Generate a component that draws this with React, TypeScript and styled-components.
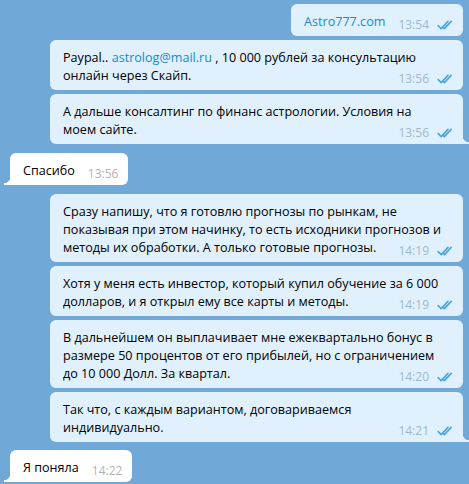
import React from "react";
import styled, { createGlobalStyle, css } from "styled-components";

const GlobalStyle = createGlobalStyle`
  html, body {
    margin: 0;
    padding: 0;
    background: #70a8d8;
  }
  body {
    font-family: "Open Sans", "Noto Sans", sans-serif;
    -webkit-font-smoothing: antialiased;
  }
`;

const Chat = styled.div`
  display: flex;
  flex-direction: column;
  padding: 4px 6px 0 10px;
  height: 484px;
  box-sizing: border-box;
  overflow: hidden;
`;

const Row = styled.div<{ $out?: boolean; $gap: number }>`
  display: flex;
  justify-content: ${(p) => (p.$out ? "flex-end" : "flex-start")};
  padding-left: ${(p) => (p.$out ? "40px" : "0")};
  margin-top: ${(p) => p.$gap}px;
`;

const Bubble = styled.div<{ $out?: boolean; $tail?: boolean; $full?: boolean }>`
  position: relative;
  display: flow-root;
  box-sizing: border-box;
  max-width: 413px;
  ${(p) => p.$full && "flex: 1;"}
  padding: 9px 12px 5px 13px;
  border-radius: 6px;
  background: ${(p) => (p.$out ? "#e0f1fd" : "#ffffff")};
  color: #000;
  font-size: 12.6px;
  line-height: 18px;
  ${(p) =>
    p.$tail &&
    (p.$out
      ? css`
          border-bottom-right-radius: 0;
          &::after {
            content: "";
            position: absolute;
            right: -6px;
            bottom: 0;
            width: 6px;
            height: 8px;
            background: radial-gradient(circle at 100% 0, transparent 6px, #e0f1fd 6.5px);
          }
        `
      : css`
          border-bottom-left-radius: 0;
          &::after {
            content: "";
            position: absolute;
            left: -6px;
            bottom: 0;
            width: 6px;
            height: 8px;
            background: radial-gradient(circle at 0 0, transparent 6px, #ffffff 6.5px);
          }
        `)}
`;

const Link = styled.span`
  color: #168acd;
`;

const Meta = styled.span<{ $out?: boolean }>`
  float: right;
  display: flex;
  align-items: center;
  gap: 8px;
  margin: 5px ${(p) => (p.$out ? "-3px" : "-2px")} -2px 13px;
  font-size: 12px;
  line-height: 14px;
  color: ${(p) => (p.$out ? "#9db9cc" : "#b3b3b3")};
`;

const Checks = () => (
  <svg width="17" height="10" viewBox="0 0 17 10" fill="none">
    <path
      d="M1.2 5.6 L4.2 8.6 L11 1.4 M7.4 8.6 L14.2 1.4 M5.8 7 L7.4 8.6"
      stroke="#44a6e8"
      strokeWidth="1.6"
      strokeLinecap="round"
      strokeLinejoin="round"
    />
  </svg>
);

type Msg = {
  out?: boolean;
  gap: number;
  tail?: boolean;
  full?: boolean;
  time: string;
  body: React.ReactNode;
};

const messages: Msg[] = [
  { out: true, gap: 0, time: "13:54", body: <Link>Astro777.com</Link> },
  {
    out: true,
    gap: 4,
    full: true,
    time: "13:56",
    body: (
      <>
        Paypal.. <Link>astrolog@mail.ru</Link> , 10 000 рублей за консультацию
        <br />
        онлайн через Скайп.
      </>
    ),
  },
  {
    out: true,
    gap: 4,
    full: true,
    tail: true,
    time: "13:56",
    body: (
      <>
        А дальше консалтинг по финанс астрологии. Условия на
        <br />
        моем сайте.
      </>
    ),
  },
  { gap: 9, tail: true, time: "13:56", body: "Спасибо" },
  {
    out: true,
    gap: 9,
    full: true,
    time: "14:19",
    body: (
      <>
        Сразу напишу, что я готовлю прогнозы по рынкам, не
        <br />
        показывая при этом начинку, то есть исходники прогнозов и
        <br />
        методы их обработки. А только готовые прогнозы.
      </>
    ),
  },
  {
    out: true,
    gap: 4,
    full: true,
    time: "14:19",
    body: (
      <>
        Хотя у меня есть инвестор, который купил обучение за 6&nbsp;000
        <br />
        долларов, и я открыл ему все карты и методы.
      </>
    ),
  },
  {
    out: true,
    gap: 4,
    full: true,
    time: "14:20",
    body: (
      <>
        В дальнейшем он выплачивает мне ежеквартально бонус в
        <br />
        размере 50 процентов от его прибылей, но с ограничением
        <br />
        до 10 000 Долл. За квартал.
      </>
    ),
  },
  {
    out: true,
    gap: 4,
    full: true,
    tail: true,
    time: "14:21",
    body: (
      <>
        Так что, с каждым вариантом, договариваемся
        <br />
        индивидуально.
      </>
    ),
  },
  { gap: 8, tail: true, time: "14:22", body: "Я поняла" },
];

export default function App() {
  return (
    <>
      <GlobalStyle />
      <Chat>
        {messages.map((m, i) => (
          <Row key={i} $out={m.out} $gap={m.gap}>
            <Bubble $out={m.out} $tail={m.tail} $full={m.full}>
              {m.body}
              <Meta $out={m.out}>
                {m.time}
                {m.out && <Checks />}
              </Meta>
            </Bubble>
          </Row>
        ))}
      </Chat>
    </>
  );
}
